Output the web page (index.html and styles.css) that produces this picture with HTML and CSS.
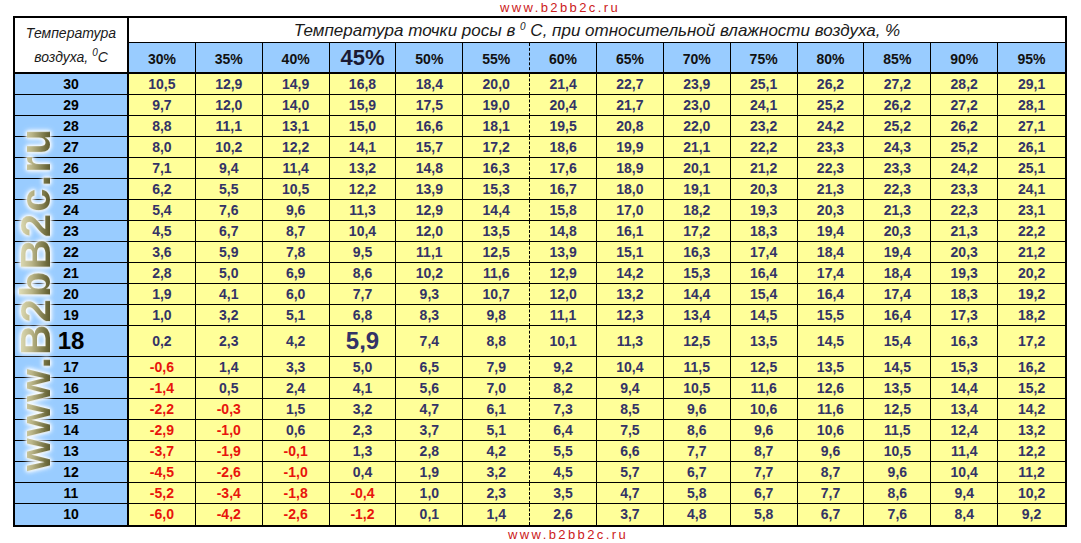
FILE: index.html
```html
<!DOCTYPE html>
<html lang="ru">
<head>
<meta charset="utf-8">
<title>Температура точки росы</title>
<link rel="stylesheet" href="styles.css">
</head>
<body>
<div class="page">
  <div class="site site-top">www.b2bb2c.ru</div>
  <div class="sheet">
    <div class="head">
      <div class="corner"><span>Температура</span><span>воздуха, <sup>0</sup>C</span></div>
      <div class="head-main">
        <div class="title">Температура точки росы в <sup>0</sup> С, при относительной влажности воздуха, %</div>
        <div class="pcts">
          <span>30%</span><span>35%</span><span>40%</span><span class="big">45%</span><span>50%</span><span>55%</span><span>60%</span><span>65%</span><span>70%</span><span>75%</span><span>80%</span><span>85%</span><span>90%</span><span>95%</span>
        </div>
      </div>
    </div>
    <div class="row"><span class="k">30</span><span>10,5</span><span>12,9</span><span>14,9</span><span>16,8</span><span>18,4</span><span>20,0</span><span>21,4</span><span>22,7</span><span>23,9</span><span>25,1</span><span>26,2</span><span>27,2</span><span>28,2</span><span>29,1</span></div>
    <div class="row"><span class="k">29</span><span>9,7</span><span>12,0</span><span>14,0</span><span>15,9</span><span>17,5</span><span>19,0</span><span>20,4</span><span>21,7</span><span>23,0</span><span>24,1</span><span>25,2</span><span>26,2</span><span>27,2</span><span>28,1</span></div>
    <div class="row"><span class="k">28</span><span>8,8</span><span>11,1</span><span>13,1</span><span>15,0</span><span>16,6</span><span>18,1</span><span>19,5</span><span>20,8</span><span>22,0</span><span>23,2</span><span>24,2</span><span>25,2</span><span>26,2</span><span>27,1</span></div>
    <div class="row"><span class="k">27</span><span>8,0</span><span>10,2</span><span>12,2</span><span>14,1</span><span>15,7</span><span>17,2</span><span>18,6</span><span>19,9</span><span>21,1</span><span>22,2</span><span>23,3</span><span>24,3</span><span>25,2</span><span>26,1</span></div>
    <div class="row"><span class="k">26</span><span>7,1</span><span>9,4</span><span>11,4</span><span>13,2</span><span>14,8</span><span>16,3</span><span>17,6</span><span>18,9</span><span>20,1</span><span>21,2</span><span>22,3</span><span>23,3</span><span>24,2</span><span>25,1</span></div>
    <div class="row"><span class="k">25</span><span>6,2</span><span>5,5</span><span>10,5</span><span>12,2</span><span>13,9</span><span>15,3</span><span>16,7</span><span>18,0</span><span>19,1</span><span>20,3</span><span>21,3</span><span>22,3</span><span>23,3</span><span>24,1</span></div>
    <div class="row"><span class="k">24</span><span>5,4</span><span>7,6</span><span>9,6</span><span>11,3</span><span>12,9</span><span>14,4</span><span>15,8</span><span>17,0</span><span>18,2</span><span>19,3</span><span>20,3</span><span>21,3</span><span>22,3</span><span>23,1</span></div>
    <div class="row"><span class="k">23</span><span>4,5</span><span>6,7</span><span>8,7</span><span>10,4</span><span>12,0</span><span>13,5</span><span>14,8</span><span>16,1</span><span>17,2</span><span>18,3</span><span>19,4</span><span>20,3</span><span>21,3</span><span>22,2</span></div>
    <div class="row"><span class="k">22</span><span>3,6</span><span>5,9</span><span>7,8</span><span>9,5</span><span>11,1</span><span>12,5</span><span>13,9</span><span>15,1</span><span>16,3</span><span>17,4</span><span>18,4</span><span>19,4</span><span>20,3</span><span>21,2</span></div>
    <div class="row"><span class="k">21</span><span>2,8</span><span>5,0</span><span>6,9</span><span>8,6</span><span>10,2</span><span>11,6</span><span>12,9</span><span>14,2</span><span>15,3</span><span>16,4</span><span>17,4</span><span>18,4</span><span>19,3</span><span>20,2</span></div>
    <div class="row"><span class="k">20</span><span>1,9</span><span>4,1</span><span>6,0</span><span>7,7</span><span>9,3</span><span>10,7</span><span>12,0</span><span>13,2</span><span>14,4</span><span>15,4</span><span>16,4</span><span>17,4</span><span>18,3</span><span>19,2</span></div>
    <div class="row"><span class="k">19</span><span>1,0</span><span>3,2</span><span>5,1</span><span>6,8</span><span>8,3</span><span>9,8</span><span>11,1</span><span>12,3</span><span>13,4</span><span>14,5</span><span>15,5</span><span>16,4</span><span>17,3</span><span>18,2</span></div>
    <div class="row row-hl"><span class="k big">18</span><span>0,2</span><span>2,3</span><span>4,2</span><span class="big">5,9</span><span>7,4</span><span>8,8</span><span>10,1</span><span>11,3</span><span>12,5</span><span>13,5</span><span>14,5</span><span>15,4</span><span>16,3</span><span>17,2</span></div>
    <div class="row"><span class="k">17</span><span class="neg">-0,6</span><span>1,4</span><span>3,3</span><span>5,0</span><span>6,5</span><span>7,9</span><span>9,2</span><span>10,4</span><span>11,5</span><span>12,5</span><span>13,5</span><span>14,5</span><span>15,3</span><span>16,2</span></div>
    <div class="row"><span class="k">16</span><span class="neg">-1,4</span><span>0,5</span><span>2,4</span><span>4,1</span><span>5,6</span><span>7,0</span><span>8,2</span><span>9,4</span><span>10,5</span><span>11,6</span><span>12,6</span><span>13,5</span><span>14,4</span><span>15,2</span></div>
    <div class="row"><span class="k">15</span><span class="neg">-2,2</span><span class="neg">-0,3</span><span>1,5</span><span>3,2</span><span>4,7</span><span>6,1</span><span>7,3</span><span>8,5</span><span>9,6</span><span>10,6</span><span>11,6</span><span>12,5</span><span>13,4</span><span>14,2</span></div>
    <div class="row"><span class="k">14</span><span class="neg">-2,9</span><span class="neg">-1,0</span><span>0,6</span><span>2,3</span><span>3,7</span><span>5,1</span><span>6,4</span><span>7,5</span><span>8,6</span><span>9,6</span><span>10,6</span><span>11,5</span><span>12,4</span><span>13,2</span></div>
    <div class="row"><span class="k">13</span><span class="neg">-3,7</span><span class="neg">-1,9</span><span class="neg">-0,1</span><span>1,3</span><span>2,8</span><span>4,2</span><span>5,5</span><span>6,6</span><span>7,7</span><span>8,7</span><span>9,6</span><span>10,5</span><span>11,4</span><span>12,2</span></div>
    <div class="row"><span class="k">12</span><span class="neg">-4,5</span><span class="neg">-2,6</span><span class="neg">-1,0</span><span>0,4</span><span>1,9</span><span>3,2</span><span>4,5</span><span>5,7</span><span>6,7</span><span>7,7</span><span>8,7</span><span>9,6</span><span>10,4</span><span>11,2</span></div>
    <div class="row"><span class="k">11</span><span class="neg">-5,2</span><span class="neg">-3,4</span><span class="neg">-1,8</span><span class="neg">-0,4</span><span>1,0</span><span>2,3</span><span>3,5</span><span>4,7</span><span>5,8</span><span>6,7</span><span>7,7</span><span>8,6</span><span>9,4</span><span>10,2</span></div>
    <div class="row"><span class="k">10</span><span class="neg">-6,0</span><span class="neg">-4,2</span><span class="neg">-2,6</span><span class="neg">-1,2</span><span>0,1</span><span>1,4</span><span>2,6</span><span>3,7</span><span>4,8</span><span>5,8</span><span>6,7</span><span>7,6</span><span>8,4</span><span>9,2</span></div>
    <div class="watermark">www.B2bB2c.ru</div>
  </div>
  <div class="site site-bottom">www.b2bb2c.ru</div>
</div>
</body>
</html>
```

FILE: styles.css
```css
body {
  margin: 0;
  background: #fff;
  font-family: "Liberation Sans", Arial, sans-serif;
}

.page {
  width: 1081px;
}

.site {
  height: 16px;
  line-height: 16px;
  font-size: 13px;
  letter-spacing: 2.4px;
  color: #cc2020;
}

.site-top {
  padding-left: 500px;
}

.site-bottom {
  padding-left: 508px;
}

.sheet {
  position: relative;
  margin-left: 13px;
  width: 1050px;
  border: 2px solid #000;
}

.head {
  display: flex;
  height: 56px;
}

.corner {
  width: 114px;
  box-sizing: border-box;
  border-right: 2px solid #000;
  border-bottom: 2px solid #000;
  background: #fff;
  display: flex;
  flex-direction: column;
  align-items: center;
  justify-content: center;
  font-style: italic;
  font-size: 14px;
  line-height: 24px;
  color: #1a1a1a;
}

.head sup {
  font-size: 10px;
  line-height: 0;
  vertical-align: 6px;
}

.head-main {
  flex: 1;
  display: flex;
  flex-direction: column;
}

.title {
  height: 25px;
  box-sizing: border-box;
  border-bottom: 1px solid #000;
  background: #fff;
  text-align: center;
  font-style: italic;
  font-size: 17px;
  line-height: 26px;
  color: #1a1a1a;
}

.pcts {
  height: 31px;
  box-sizing: border-box;
  border-bottom: 2px solid #000;
  background: #99ccff;
  display: grid;
  grid-template-columns: repeat(14, 1fr);
}

.pcts span {
  border-right: 1px solid #000;
  font-weight: bold;
  font-size: 14px;
  line-height: 32px;
  text-align: center;
  color: #111;
}

.pcts span:last-child {
  border-right: none;
}

.pcts span:nth-child(6) {
  border-right-style: dashed;
}

.pcts .big {
  font-size: 22px;
  line-height: 30px;
  color: #1a1a33;
}

.row {
  display: grid;
  grid-template-columns: 114px repeat(14, 1fr);
  height: 21px;
}

.row span {
  box-sizing: border-box;
  border-right: 1px solid #000;
  border-bottom: 1px solid #000;
  background: #ffff99;
  color: #333366;
  font-weight: bold;
  font-size: 14px;
  line-height: 20px;
  text-align: center;
}

.row span:last-child {
  border-right: none;
}

.row span:nth-child(7) {
  border-right-style: dashed;
}

.row:nth-last-child(2) span {
  border-bottom: none;
}

.row .k {
  background: #99ccff;
  color: #000;
  border-right: 2px solid #000;
}

.row .neg {
  color: #e8140c;
}

.row-hl {
  height: 31px;
}

.row-hl span {
  line-height: 30px;
}

.row-hl .big {
  font-size: 24px;
}

.watermark {
  position: absolute;
  left: 21px;
  top: 281px;
  transform: translate(-50%, -50%) rotate(-90deg);
  font-weight: bold;
  font-size: 42px;
  line-height: 1;
  letter-spacing: 2px;
  white-space: nowrap;
  color: transparent;
  background: linear-gradient(to bottom, #ecebc8 0%, #b9b487 40%, #6e6b3c 75%, #3f3e1e 100%);
  -webkit-background-clip: text;
  background-clip: text;
  filter: drop-shadow(0 0 1px #fff) drop-shadow(0 0 2px #fff) drop-shadow(0 0 2px #e6f2ff);
}
```
